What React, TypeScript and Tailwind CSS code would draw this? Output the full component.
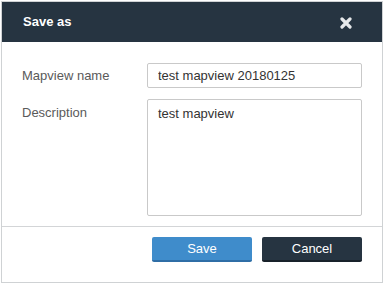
import { useState } from 'react'

const font = { fontFamily: '"Liberation Sans", Arial, sans-serif' }

function CloseIcon() {
  return (
    <svg width="12" height="12" viewBox="0 0 12 12" aria-hidden="true">
      <path d="M2 2 L10 10 M10 2 L2 10" stroke="#e6e8ea" strokeWidth="3.2" strokeLinecap="round" />
    </svg>
  )
}

export default function App() {
  const [name, setName] = useState('test mapview 20180125')
  const [desc, setDesc] = useState('test mapview')

  return (
    <div className="w-[384px] h-[284px] bg-white pt-[1px] pl-[1px]" style={font}>
      <div className="w-[382px] h-[282px] border border-[#cfd2d4] flex flex-col bg-white">
        <div className="h-[40px] bg-[#263441] flex items-center justify-between pl-[21px] pr-[30px]">
          <span className="text-white font-bold text-[13px]">Save as</span>
          <button className="flex items-center justify-center mt-[1px]">
            <CloseIcon />
          </button>
        </div>

        <div className="flex flex-col gap-[11px] pt-[21px] pl-[20px] pr-[18px] pb-[10px]">
          <div className="flex items-center">
            <label className="w-[125px] text-[13px] text-[#5a5a5a]">Mapview name</label>
            <input
              value={name}
              onChange={e => setName(e.target.value)}
              className="w-[215px] h-[25px] border border-[#c9c9c9] rounded-[2px] px-[10px] text-[13px] text-[#333] outline-none"
            />
          </div>
          <div className="flex items-start">
            <label className="w-[125px] text-[13px] text-[#5a5a5a] pt-[4px]">Description</label>
            <textarea
              value={desc}
              onChange={e => setDesc(e.target.value)}
              className="w-[215px] h-[117px] border border-[#c9c9c9] rounded-[2px] px-[10px] pt-[4px] text-[13px] text-[#333] outline-none resize-none"
            />
          </div>
        </div>

        <div className="border-t border-[#d3d5d7] flex justify-end gap-[10px] pt-[10px] pr-[20px]">
          <button className="w-[100px] h-[25px] rounded-[2px] bg-[#3f8ccb] border-b-2 border-[#2f6ea6] text-white text-[13px]">
            Save
          </button>
          <button className="w-[100px] h-[25px] rounded-[2px] bg-[#263441] border-b-2 border-[#18212a] text-white text-[13px]">
            Cancel
          </button>
        </div>
      </div>
    </div>
  )
}
